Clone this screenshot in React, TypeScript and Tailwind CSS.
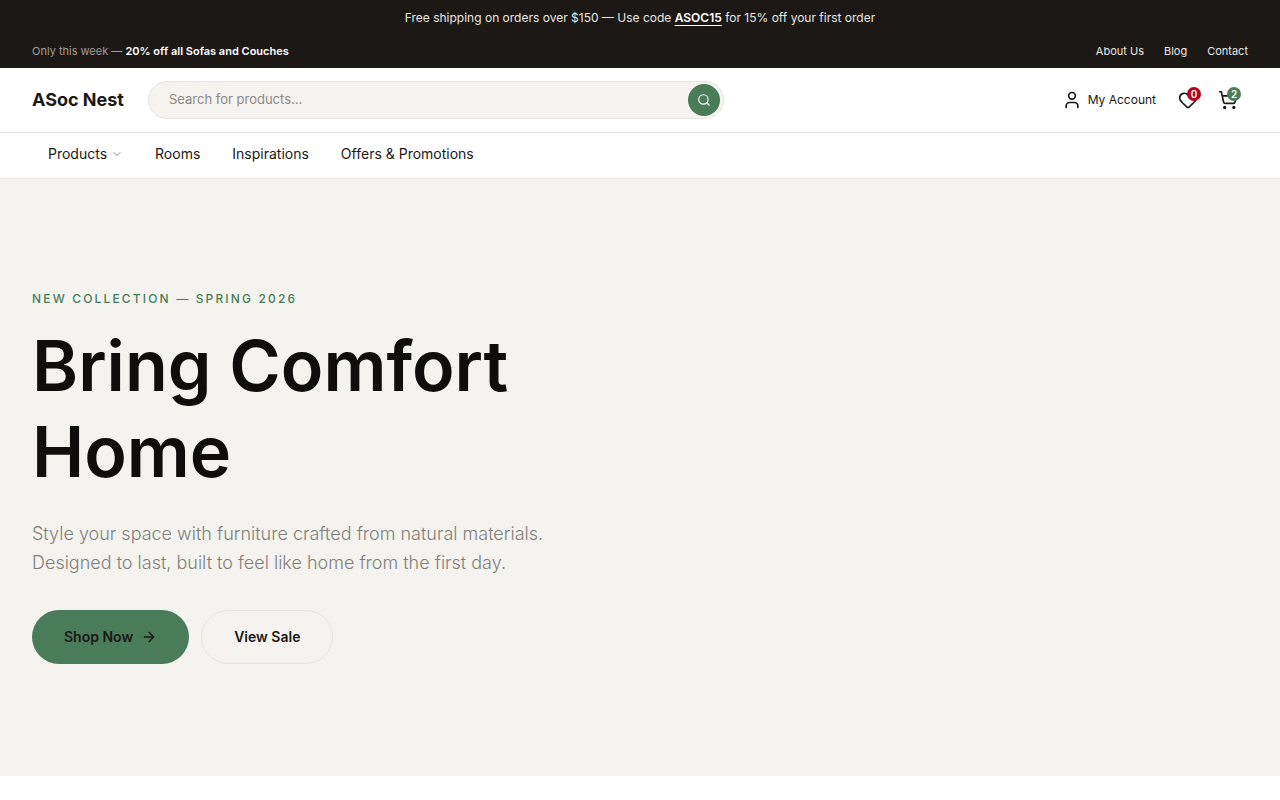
import { ArrowRight, ChevronDown, Heart, Search, ShoppingCart, User } from 'lucide-react';

const topLinks = ['About Us', 'Blog', 'Contact'];
const navLinks = ['Rooms', 'Inspirations', 'Offers & Promotions'];

function TopBar() {
  return (
    <div className="bg-[#1c1815] text-[#e9e7e4]">
      <p className="px-8 py-2 text-center text-xs leading-5">
        Free shipping on orders over $150 — Use code{' '}
        <strong className="font-semibold text-white underline underline-offset-3">ASOC15</strong> for 15% off your
        first order
      </p>
      <div className="flex items-center justify-between px-8 pt-[5px] pb-[7px] text-[11px] leading-5">
        <p className="text-[#a19d98]">
          Only this week — <strong className="font-semibold text-white">20% off all Sofas and Couches</strong>
        </p>
        <div className="flex gap-5">
          {topLinks.map((link) => (
            <a key={link} href="#">
              {link}
            </a>
          ))}
        </div>
      </div>
    </div>
  );
}

function Header() {
  return (
    <header className="flex items-center gap-6 border-b border-[#e6e5e2] px-8 py-3">
      <a href="#" className="text-lg font-bold">
        ASoc Nest
      </a>
      <form className="flex h-[38px] max-w-xl flex-1 items-center rounded-full border border-[#e6e5e2] bg-[#f4f3ef] pr-[3px]">
        <input
          type="search"
          aria-label="Search for products"
          placeholder="Search for products…"
          className="min-w-0 flex-1 bg-transparent pl-5 text-[13px] outline-none placeholder:text-[#8c8985]"
        />
        <button
          type="button"
          aria-label="Search"
          className="flex size-8 items-center justify-center rounded-full bg-[#4a7c59] text-white"
        >
          <Search size={14} />
        </button>
      </form>
      <div className="ml-auto flex items-center">
        <a href="#" className="flex items-center gap-1.5 px-3 text-xs">
          <User size={20} />
          My Account
        </a>
        <button type="button" aria-label="Wishlist" className="relative p-2.5">
          <Heart size={20} />
          <span className="absolute top-[7px] right-[7px] flex size-3.5 items-center justify-center rounded-full bg-[#b8001f] text-[10px] font-semibold text-white">
            0
          </span>
        </button>
        <button type="button" aria-label="Cart" className="relative p-2.5">
          <ShoppingCart size={20} />
          <span className="absolute top-[7px] right-[7px] flex size-3.5 items-center justify-center rounded-full bg-[#4a7c59] text-[10px] font-semibold text-white">
            2
          </span>
        </button>
      </div>
    </header>
  );
}

function Nav() {
  return (
    <nav className="flex gap-8 border-b border-[#e6e5e2] px-12 pt-[11px] pb-3.5 text-sm leading-5">
      <button type="button" className="flex items-center gap-1">
        Products
        <ChevronDown size={12} className="text-[#8c8985]" />
      </button>
      {navLinks.map((link) => (
        <a key={link} href="#">
          {link}
        </a>
      ))}
    </nav>
  );
}

function Hero() {
  return (
    <section className="bg-[#f4f3ef] px-8 py-28">
      <div className="max-w-xl">
        <p className="text-xs leading-4 font-medium tracking-[0.18em] text-[#4a7c59] uppercase">
          New Collection — Spring 2026
        </p>
        <h1 className="mt-4 text-[70px] leading-[86px] font-semibold text-[#0f0e0c]">Bring Comfort Home</h1>
        <p className="mt-6 max-w-[540px] text-lg leading-[29px] font-light text-[#827f7b]">
          Style your space with furniture crafted from natural materials. Designed to last, built to feel like home
          from the first day.
        </p>
        <div className="mt-[33px] flex gap-3 text-sm leading-6 font-semibold">
          <a href="#" className="flex items-center gap-2 rounded-full bg-[#4a7c59] px-8 py-[15px]">
            Shop Now
            <ArrowRight size={16} />
          </a>
          <a href="#" className="flex items-center rounded-full border border-[#e6e5e2] px-8 py-3.5">
            View Sale
          </a>
        </div>
      </div>
    </section>
  );
}

export default function App() {
  return (
    <div className="min-h-screen bg-white font-['Inter',sans-serif] text-[#1c1815]">
      <TopBar />
      <Header />
      <Nav />
      <Hero />
    </div>
  );
}
